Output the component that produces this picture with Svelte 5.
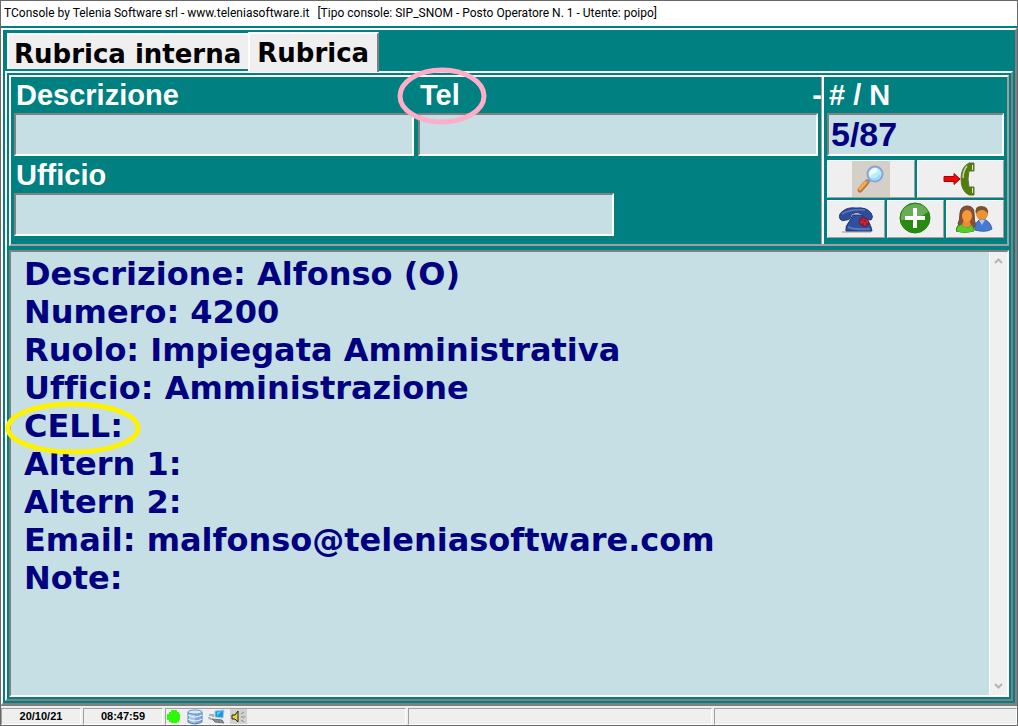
<script>
  let activeTab = $state('rubrica');
  let description = $state('');
  let phone = $state('');
  let office = $state('');
  const position = '5/87';
  const details = [
    'Descrizione: Alfonso (O)',
    'Numero: 4200',
    'Ruolo: Impiegata Amministrativa',
    'Ufficio: Amministrazione',
    'CELL:',
    'Altern 1:',
    'Altern 2:',
    'Email: malfonso@teleniasoftware.com',
    'Note:'
  ].join('\n');
</script>

<div class="window">
  <header class="title">
    <span>TConsole by Telenia Software srl - www.teleniasoftware.it</span>
    <span>[Tipo console: SIP_SNOM - Posto Operatore N. 1 - Utente: poipo]</span>
  </header>

  <main class="frame">
    <div class="tabs" role="tablist">
      <button class="tab" class:active={activeTab === 'interna'} role="tab" aria-selected={activeTab === 'interna'} onclick={() => (activeTab = 'interna')}>Rubrica interna</button>
      <button class="tab" class:active={activeTab === 'rubrica'} role="tab" aria-selected={activeTab === 'rubrica'} onclick={() => (activeTab = 'rubrica')}>Rubrica</button>
    </div>

    <section class="page">
      <div class="search">
        <form class="fields" onsubmit={(e) => e.preventDefault()}>
          <div class="pair">
            <div class="field">
              <label for="description">Descrizione</label>
              <input id="description" type="text" bind:value={description} />
            </div>
            <div class="field">
              <div class="heading">
                <span class="marked">
                  <label for="phone">Tel</label>
                  <svg class="ring pink" viewBox="0 0 90 58" aria-hidden="true"><ellipse cx="45" cy="29" rx="42" ry="26" /></svg>
                </span>
                <span class="dash">-</span>
              </div>
              <input id="phone" type="text" bind:value={phone} />
            </div>
          </div>
          <div class="field office">
            <label for="office">Ufficio</label>
            <input id="office" type="text" bind:value={office} />
          </div>
        </form>

        <div class="side">
          <div class="field">
            <label for="position"># / N</label>
            <input id="position" class="counter" type="text" readonly value={position} />
          </div>
          <div class="actions">
            <div class="row">
              <button class="action" aria-label="Cerca">
                <span class="swatch">
                  <svg width="38" height="36" viewBox="0 0 38 36">
                    <path d="M15 21 L8 29" stroke="#b87432" stroke-width="5" stroke-linecap="round" />
                    <path d="M14 21 L8 28" stroke="#f9a850" stroke-width="3" stroke-linecap="round" />
                    <path d="M18 19 L15 22" stroke="#8d929c" stroke-width="3" />
                    <circle cx="23" cy="13" r="7.500" fill="#b9ecfd" stroke="#88a4d2" stroke-width="2" />
                    <path d="M17 13 Q18 7 24 7 Q28 9 23 12 Q19 13 18 17Z" fill="#fff" opacity=".8" />
                    <path d="M19 18 Q25 20 28 14" fill="none" stroke="#8edcf5" stroke-width="2" />
                  </svg>
                </span>
              </button>
              <button class="action" aria-label="Chiama">
                <svg width="34" height="36" viewBox="0 0 34 36">
                  <path d="M1 15.500 H11 V12.500 L17 18 L11 23.500 V20.500 H1Z" fill="#fe0000" stroke="#8b1010" stroke-width="1" />
                  <path d="M26 2 H31 V10 H26 Q24 18 26 26 H31 V34 H26 Q18 30 18 18 Q18 6 26 2Z" fill="#517f05" stroke="#5f7340" />
                  <path d="M24 5 Q20 10 20 17" fill="none" stroke="#c9dba9" stroke-width="1.500" />
                  <path d="M29.500 4 V9 M29.500 27 V32" stroke="#dbe6c8" stroke-width="1" />
                </svg>
              </button>
            </div>
            <div class="row">
              <button class="action" aria-label="Telefono">
                <svg width="36" height="32" viewBox="0 0 36 32">
                  <path d="M4 29 H33" stroke="#c9c2bc" stroke-width="2" />
                  <path d="M8 28 Q7 23 11 19 L15 12 H25 L30 18 Q33 22 34 28Z" fill="#2f4fa0" stroke="#1e3474" />
                  <path d="M2 16 Q0 11 5 8 Q10 4 18 5 Q29 4 33 10 Q36 14 33 17 Q27 17 25 14 L24 11 Q17 8 13 12 Q13 17 8 17 Q4 19 2 16Z" fill="#2f4b99" stroke="#263a7c" />
                  <path d="M4 11 Q12 6 27 7" fill="none" stroke="#5d79bd" stroke-width="1.500" />
                  <path d="M10 24 Q17 27 32 26" fill="none" stroke="#5876bb" stroke-width="2" />
                  <ellipse cx="26" cy="19" rx="5" ry="4" transform="rotate(25 26 19)" fill="#c72336" stroke="#67162b" />
                  <path d="M23 17h2m1 1h2m-4 3h2m2 0h2" stroke="#6f1424" />
                </svg>
              </button>
              <button class="action" aria-label="Aggiungi">
                <svg width="34" height="34" viewBox="0 0 34 34">
                  <circle cx="16" cy="16" r="15" fill="#34941b" stroke="#287718" />
                  <path d="M2 15 Q3 3 16 2 Q26 2 29 10 Q19 18 2 18Z" fill="#67ad56" />
                  <path d="M2 18 Q19 18 30 10 Q33 25 21 30 Q7 34 2 18Z" fill="#268b10" />
                  <path d="M14 6 H18 V14 H26 V18 H18 V26 H14 V18 H6 V14 H14Z" fill="#fff" />
                </svg>
              </button>
              <button class="action" aria-label="Contatti">
                <svg width="38" height="32" viewBox="0 0 38 32">
                  <path d="M3 21 Q0 25 0 28 Q8 31 18 28 V21Z" fill="#48b51d" stroke="#267e10" />
                  <path d="M2 21 Q4 17 4 10 Q5 3 11 3 Q18 3 18 10 Q18 18 20 23 Q12 28 2 21Z" fill="#875137" stroke="#62452e" />
                  <path d="M8 17 H13 L15 22 Q11 27 6 22Z" fill="#e88d31" />
                  <ellipse cx="11" cy="13" rx="5" ry="6" fill="#f59a35" />
                  <path d="M19 27 Q19 17 26 16 Q34 17 36 26 Q30 30 19 27Z" fill="#457ad4" stroke="#3d62a4" />
                  <path d="M23 17 L26 22 L29 17Z" fill="#aecaf0" />
                  <circle cx="26" cy="11" r="6" fill="#e99332" />
                  <path d="M20 11 Q18 3 25 3 Q33 3 32 11 Q30 7 26 7 Q22 7 20 11Z" fill="#7c532f" />
                  <path d="M1 26 Q4 21 6 22 Q11 27 16 22 L18 28 Q8 31 1 28Z" fill="#55cc27" />
                </svg>
              </button>
            </div>
          </div>
        </div>
      </div>

      <div class="details">
        <textarea class="text" aria-label="Dettagli" readonly rows="9" value={details}></textarea>
        <svg class="ring yellow" viewBox="0 0 136 54" aria-hidden="true"><ellipse cx="68" cy="27" rx="65" ry="24" /></svg>
        <div class="scroll">
          <button aria-label="Scorri su"><svg width="9" height="6" viewBox="0 0 9 6"><path d="M1 5 L4.500 1.500 L8 5" /></svg></button>
          <button aria-label="Scorri giù"><svg width="9" height="6" viewBox="0 0 9 6"><path d="M1 1 L4.500 4.500 L8 1" /></svg></button>
        </div>
      </div>
    </section>
  </main>

  <footer class="status">
    <div class="panel short">20/10/21</div>
    <div class="panel short">08:47:59</div>
    <div class="panel icons">
      <svg width="16" height="16" viewBox="0 0 16 16"><path d="M5 1h6v2h2v2h1v6h-1v2h-2v1H5v-1H3v-2H1V5h2V3h2Z" fill="#2bfb05" /></svg>
      <svg width="18" height="16" viewBox="0 0 18 16">
        <path d="M2 3 V13 Q9 17 16 13 V3Z" fill="#7fa9dc" stroke="#5580b7" />
        <path d="M3 5v7q3 2 6 2V6Z" fill="#a9c8ec" />
        <ellipse cx="9" cy="3" rx="7" ry="2" fill="#d8e9fa" stroke="#6b94c8" />
        <path d="M2 6Q9 10 16 6M2 10Q9 14 16 10" fill="none" stroke="#f4f9ff" stroke-width="1" />
      </svg>
      <svg width="18" height="16" viewBox="0 0 18 16">
        <path d="M7 2 L16 1 L15 9 L7 8Z" fill="#159be4" stroke="#a6cbdc" />
        <path d="M9 3 L14 2 L9 7Z" fill="#58c8fa" />
        <path d="M4 10 L14 11 L16 14 L7 13Z" fill="#8a8f96" stroke="#707780" />
        <path d="M1 6h3m-3 2q0 2 3 2m1-5v3" fill="none" stroke="#aab0b8" stroke-width="2" />
      </svg>
      <span class="sound"><svg width="17" height="16" viewBox="0 0 17 16">
        <path d="M2 6H5L8 2V13L5 10H2Z" fill="#e4d82a" stroke="#222" />
        <path d="M11 5l3-2M11 8h4M11 11l3 2" stroke="#888" />
      </svg></span>
    </div>
    <div class="panel wide"></div>
    <div class="panel wide"></div>
  </footer>
</div>

<style>
  :global(body) { margin: 0; }
  * { box-sizing: border-box; }
  .window {
    min-height: 100vh;
    display: flex;
    flex-direction: column;
    border: 1px solid #696969;
    background: #008080;
    font-family: "Liberation Sans", Arial, sans-serif;
  }
  .title {
    display: flex;
    gap: 8px;
    height: 25px;
    padding-left: 3px;
    background: #fff;
    color: #000;
    font: 12px/24px Roboto, "Open Sans", sans-serif;
    white-space: nowrap;
    overflow: hidden;
  }
  .frame {
    flex: 1;
    display: flex;
    flex-direction: column;
    margin-top: 2px;
    padding: 2px;
    border: 2px solid;
    border-color: #fff #808080 #808080 #fff;
  }
  .tabs {
    display: flex;
    align-items: flex-end;
    height: 39px;
    padding-left: 2px;
  }
  .tab {
    height: 36px;
    margin-bottom: 2px;
    padding: 2px 7px 0 5px;
    border: 0;
    border-top: 2px solid #fff;
    border-left: 2px solid #fff;
    background: #efefef;
    color: #000;
    font: bold 26px/34px "DejaVu Sans", Verdana, sans-serif;
    white-space: nowrap;
  }
  .tab.active {
    position: relative;
    height: 40px;
    margin-bottom: -1px;
    padding: 0 8px 0 7px;
    border-right: 2px solid #808080;
  }
  .page {
    flex: 1;
    display: flex;
    flex-direction: column;
    gap: 4px;
    padding: 2px;
    border: 2px solid;
    border-color: #fff #808080 #808080 #fff;
  }
  .search {
    display: flex;
    border: 2px solid;
    border-color: #fff #a0a0a0 #a0a0a0 #fff;
  }
  .fields {
    flex: 1;
    min-width: 0;
    padding: 0 4px 8px 3px;
  }
  .pair { display: grid; grid-template-columns: 1fr 1fr; gap: 4px; }
  .field { display: flex; flex-direction: column; min-width: 0; }
  .office { width: 74.6%; margin-top: 1px; }
  .field label, .dash {
    display: block;
    padding-left: 2px;
    color: #fff;
    font-size: 29px;
    font-weight: bold;
    line-height: 36px;
    white-space: nowrap;
  }
  .heading { display: flex; justify-content: space-between; }
  .dash { margin-right: -4px; }
  .marked { position: relative; }
  .field input {
    width: 100%;
    height: 43px;
    padding: 0 2px;
    border: 2px solid;
    border-color: #808080 #fff #fff #808080;
    border-radius: 0;
    outline: 0;
    background: #c5dfe4;
    color: #000080;
    font: bold 34px "Liberation Sans", Arial, sans-serif;
  }
  .side {
    width: 185px;
    padding: 0 3px 4px;
    border-left: 2px solid #fff;
    box-shadow: -1px 0 #a0a0a0;
  }
  .actions { display: flex; flex-direction: column; gap: 2px; padding-top: 4px; }
  .row { display: flex; gap: 2px; }
  .action {
    flex: 1;
    display: flex;
    align-items: center;
    justify-content: center;
    height: 38px;
    padding: 0;
    border: 1px solid;
    border-color: #fff #a0a0a0 #a0a0a0 #fff;
    background: #efefef;
  }
  .action svg, .panel svg { display: block; flex: none; fill: none; }
  .swatch { background: #d4d0c8; }
  .ring { position: absolute; overflow: visible; fill: none; pointer-events: none; }
  .ring ellipse { stroke-width: 5; }
  .pink { left: -21px; top: -10px; width: 90px; height: 58px; stroke: #ffaec9; z-index: 1; }
  .yellow { left: -6px; top: 149px; width: 136px; height: 54px; stroke: #fff200; z-index: 1; }
  .details {
    position: relative;
    flex: 1;
    display: flex;
    border: 2px solid;
    border-color: #808080 #fff #fff #808080;
    background: #c5dfe4;
  }
  .text {
    flex: 1;
    min-width: 0;
    padding: 3px 13px;
    border: 0;
    outline: 0;
    resize: none;
    background: transparent;
    color: #000080;
    font: bold 32px/38px "DejaVu Sans", Verdana, sans-serif;
    font-variant-ligatures: none;
  }
  .scroll {
    display: flex;
    flex-direction: column;
    justify-content: space-between;
    width: 18px;
    background: #f0f0f0;
    border-left: 1px solid #fff;
  }
  .scroll button { height: 18px; padding: 0; border: 0; background: transparent; line-height: 0; }
  .scroll path { fill: none; stroke: #b4b4b4; stroke-width: 2; }
  .status {
    display: flex;
    gap: 2px;
    height: 20px;
    padding-top: 2px;
    border-top: 1px solid #808080;
    background: #efefef;
  }
  .panel {
    border: 1px solid;
    border-color: #a0a0a0 #fff #fff #a0a0a0;
    color: #000;
    font-size: 11px;
    font-weight: bold;
    line-height: 15px;
    text-align: center;
  }
  .short { width: 80px; flex: none; }
  .icons { display: flex; gap: 4px; width: 241px; flex: none; }
  .sound { background: #d0d0d0; }
  .wide { flex: 1; }
</style>
